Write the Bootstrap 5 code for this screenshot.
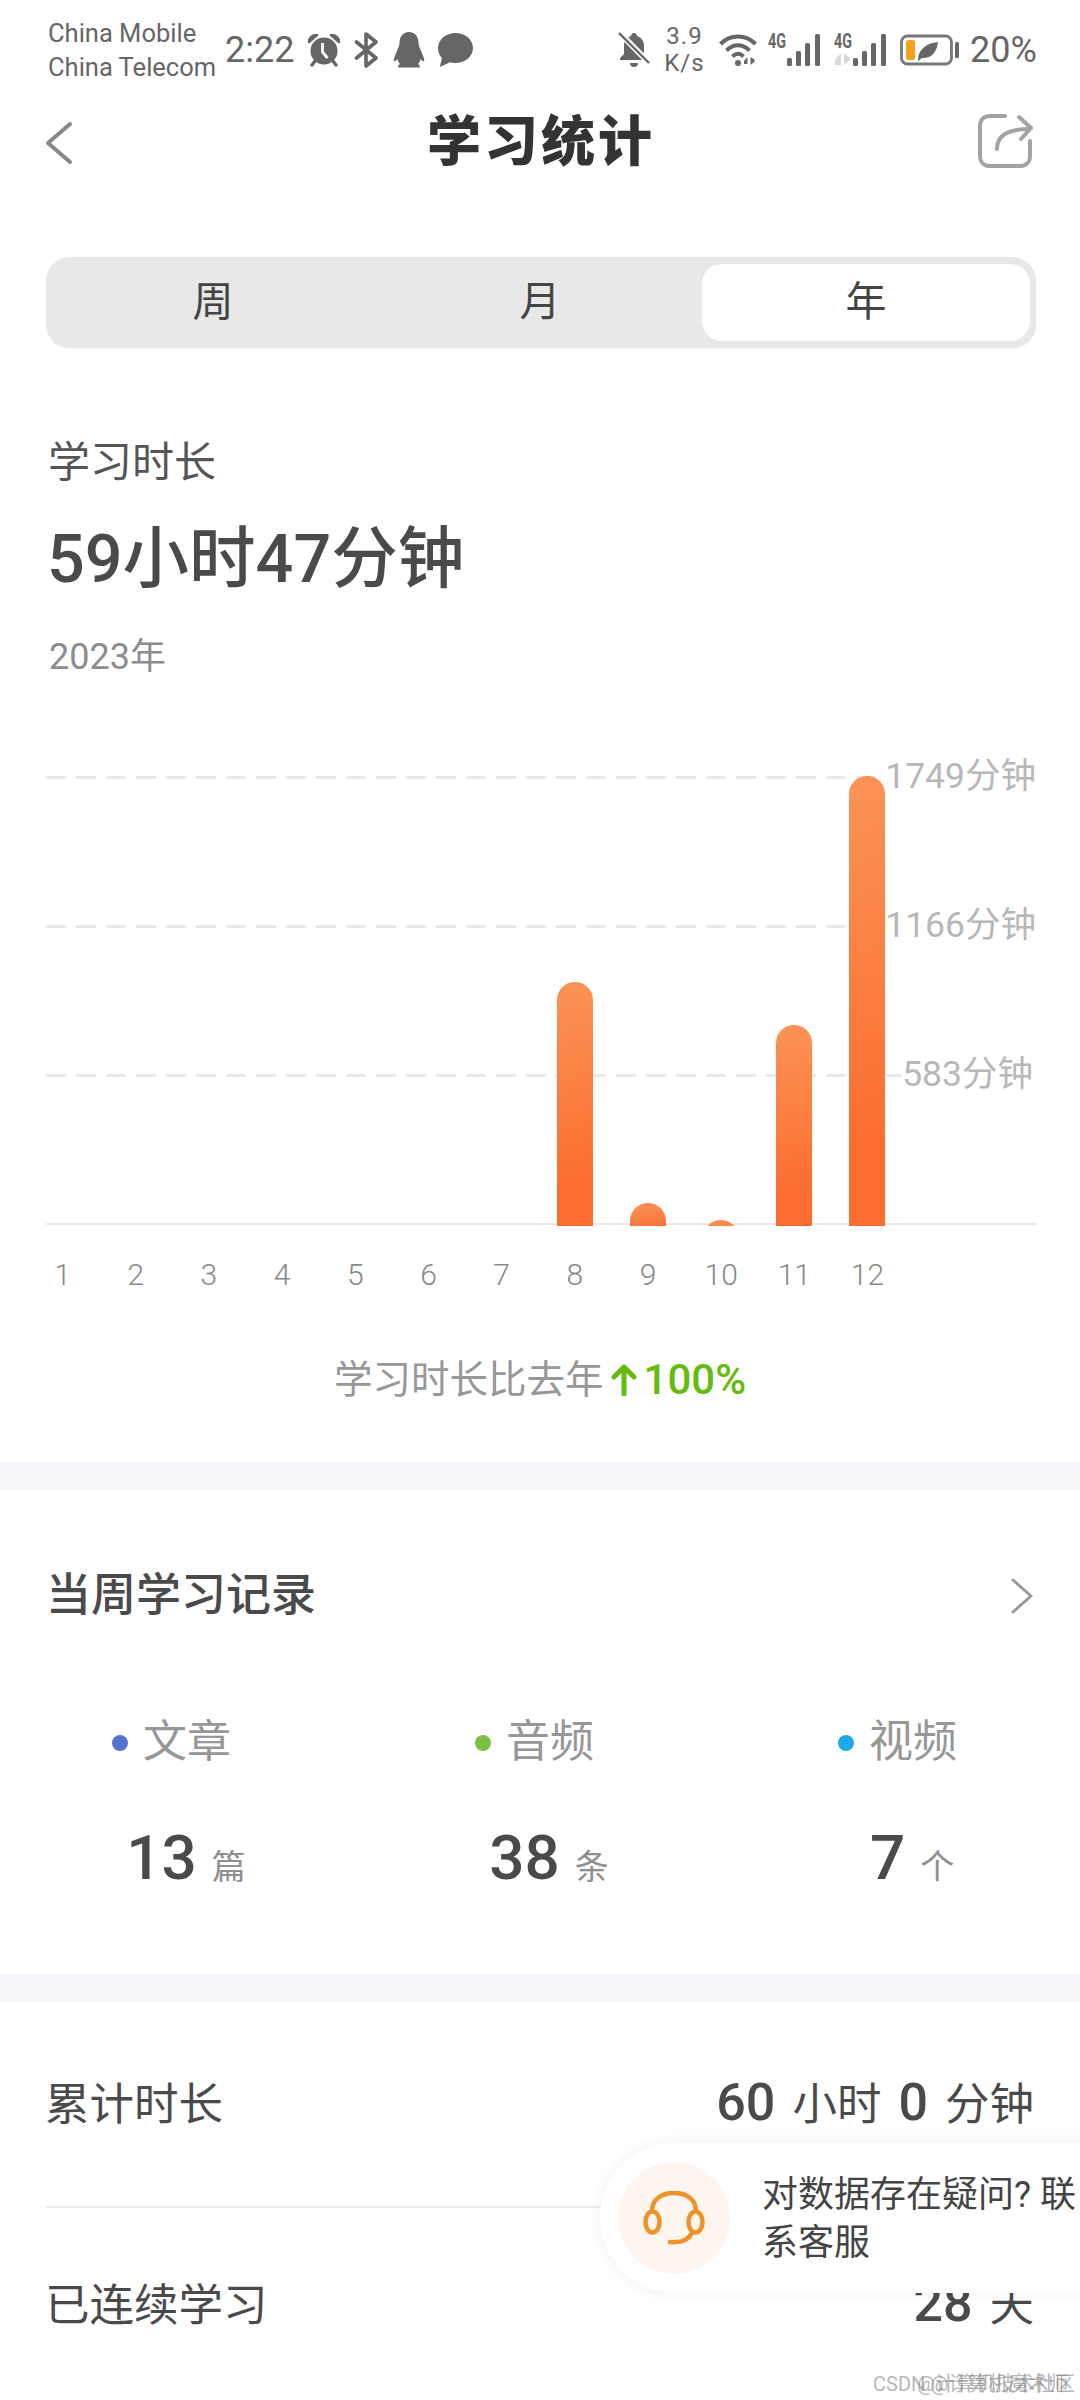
<!DOCTYPE html>
<html lang="zh-CN">
<head>
<meta charset="utf-8">
<title>学习统计</title>
<link href="https://cdn.jsdelivr.net/npm/bootstrap@5.3.0/dist/css/bootstrap.min.css" rel="stylesheet">
<style>
html,body{margin:0;background:#fff}
body{font-family:Roboto,"Noto Sans CJK SC",sans-serif;color:#4a4a4a}
.page{position:relative;width:1080px;height:2400px;overflow:hidden;background:#fff}
.sbar{height:85px;padding:14px 43px 0 48px;color:#666}
.carrier{font-size:25.500px;line-height:34px;width:177px;white-space:nowrap}
.clock{font-size:36px;line-height:1;width:82px}
.speed{font-size:24px;line-height:27px;width:51px;text-align:center;letter-spacing:1px;white-space:nowrap}
.pct{font-size:36px;line-height:1;margin-left:10px;width:67px;white-space:nowrap}
.sicons svg{display:block;flex:none}
.sig{margin-top:-6px;margin-right:12px}
.topbar{height:116px;padding:0 47px 0 45px}
.topbar h1{font-size:54px;font-weight:900;color:#333;line-height:1;margin:0;letter-spacing:3px;position:absolute;left:427px}
.seg{height:90px;margin:56px 44px 0 46px;background:#e8e8e8;border-radius:24px;padding:7px 6px 6px 2px;box-shadow:0 2px 0 #efefef}
.seg div{flex:0 0 327px;font-size:41px;color:#444;border-radius:20px;padding-left:3px}
.seg .on{flex:1 1 0;background:#fff;padding-left:0}
.lbl{font-size:42px;line-height:50px;color:#555;margin:91px 0 0 48px}
.big{font-size:66.500px;line-height:80px;font-weight:500;margin:31px 0 0 47px}
.yr{font-size:36px;line-height:44px;color:#8d8d8d;margin:36px 0 0 49px}
.plot{position:relative;margin-top:78px;padding:0 44px 0 46px}
.gl{height:40px;margin-bottom:109px;color:#b7b7b7;font-size:35.500px}
.gl:nth-child(3){padding-right:3px}
.dash{height:3px;flex:1;background:repeating-linear-gradient(90deg,#e9e9e9 0 20px,transparent 20px 30px)}
.base{height:40px}
.base i{display:block;height:2px;background:#e9e9e9}
.bars{position:absolute;left:26px;top:20px;width:878px;height:449px}
.bars>div{flex:1;display:flex;justify-content:center;align-items:flex-end}
.bwrap{width:36px;overflow:hidden;display:flex;align-items:flex-start}
.bwrap i{display:block;width:36px;height:100%;min-height:36px;border-radius:18px 18px 0 0;background:linear-gradient(170deg,#fb9356,#fc6c2e 85%)}
.xl{width:878px;margin:11px 0 0 26px;font-size:30px;font-weight:300;line-height:40px;color:#888}
.xl span{flex:1;text-align:center}
.cmp{font-size:38.500px;line-height:50px;height:50px;margin-top:60px;color:#979797;padding-left:334px;white-space:nowrap}
.cmp svg{margin:0 7px;flex:none}
.cmp b{font-size:42px;font-weight:500;color:#66bb11}
.band{height:28px;background:#f5f6f9}
.sect{font-size:45px;line-height:56px;height:56px;font-weight:500;margin:78px 47px 0 46px}
.stats{padding-left:112px;gap:215px;margin-top:90px}
.stat{width:148px}
.stat .nm{font-size:44px;line-height:56px;height:56px;color:#979797;white-space:nowrap}
.dot{display:inline-block;width:16px;height:16px;border-radius:50%;margin-right:15px;vertical-align:6px}
.stat .val{font-size:62px;line-height:76px;height:76px;font-weight:500;margin-top:50px;text-align:center;white-space:nowrap}
.val small{font-size:34px;font-weight:400;color:#8f8f8f;margin-left:15px}
.kv{font-size:44.500px;line-height:56px;height:56px;padding:0 46px 0 45px;white-space:nowrap}
.kv b{font-weight:500;font-size:52px;margin:0 17px;line-height:1}
.hr{height:2px;background:#ebebeb;margin:73px 44px 70px 46px}
.pop{position:absolute;left:600px;top:2143px;width:520px;height:150px;background:#fff;border-radius:75px 0 0 75px;box-shadow:0 0 12px 4px rgba(0,0,0,.035);padding-left:18px;gap:32px}
.halo{width:112px;height:112px;border-radius:50%;background:#fdf5ee;flex:none}
.ptext{font-size:36px;line-height:48px;color:#444;width:316px;padding-top:2px}
.wm{position:absolute;font-size:20px;line-height:24px;color:rgba(120,120,120,.55);top:2372px;white-space:nowrap}
</style>
</head>
<body>
<div class="page">
  <div class="sbar d-flex align-items-center">
    <div class="carrier">China Mobile<br>China Telecom</div>
    <div class="clock">2:22</div>
    <div class="sicons d-flex align-items-center">
      <svg width="34" height="34" viewBox="0 0 34 34" style="margin-right:13px"><path d="M2 9C2 5 5 2 10 2L2 9zM32 9c0-4-3-7-8-7l8 7z" fill="#666" stroke="#666" stroke-width="2.500" stroke-linejoin="round"/><circle cx="17" cy="18" r="13.500" fill="#666"/><path d="M15.500 10v9l5 6" fill="none" stroke="#fff" stroke-width="2.800"/><path d="M8 28 5 32M26 28l3 4" stroke="#666" stroke-width="3.400" stroke-linecap="round"/></svg>
      <svg width="26" height="36" viewBox="0 0 26 36" style="margin-right:13px"><path d="M2.500 10 22 26 12 34V2l10 8L2.500 26" fill="none" stroke="#666" stroke-width="3.600" stroke-linejoin="round" stroke-linecap="round"/></svg>
      <svg width="32" height="36" viewBox="0 0 32 36" style="margin-right:13px"><path d="M16 0c6.500 0 9.500 5 9.500 11 0 3 1.500 5 3 9 1.500 4 3.500 8 2.500 9-1 .6-2.500-.6-3.500-2-.5 2-1 3.500-2.500 5 1.500.6 2 2 2 3.500H5c0-1.500.5-3 2-3.500-1.500-1.500-2-3-2.500-5C3.500 28.400 2 29.600 1 29c-1-1 1-5 2.500-9 1.500-4 3-6 3-9C6.500 5 9.500 0 16 0z" fill="#666"/></svg>
      <svg width="35" height="34" viewBox="0 0 35 34"><path d="M17.500 0C27 0 35 6.500 35 15c0 8.500-8 15-17.500 15-2 0-3.800-.3-5.500-.8L3 33.500c-.6.300-1.200-.2-1-.8l2-7.500C1.500 22.500 0 19 0 15 0 6.500 8 0 17.500 0z" fill="#666"/></svg>
    </div>
    <div class="flex-fill"></div>
    <div class="sicons d-flex align-items-center">
      <svg width="32" height="36" viewBox="0 0 32 36" style="margin-right:9px"><path d="M16 1c2 0 3 1.500 3 3 5 1.500 7 5.500 7 10v8l4 4v2H2v-2l4-4v-8c0-5 2-8.500 7-10 0-1.500 1-3 3-3z" fill="#666"/><path d="M12 31h8c0 3-2 4-4 4s-4-1-4-4z" fill="#666"/><path d="M1 0 32 32" stroke="#fff" stroke-width="6"/><path d="M1 1 31 31" stroke="#666" stroke-width="2.400"/></svg>
      <div class="speed">3.9<br>K/s</div>
      <svg width="40" height="34" viewBox="0 0 40 34" style="margin-left:9px;margin-right:9px"><path d="M1.500 11C11 1 27 1 36.500 11" fill="none" stroke="#666" stroke-width="4"/><path d="M7.500 17.500c7-7 16-7 23 0" fill="none" stroke="#666" stroke-width="4"/><path d="M13.500 23.500c3.500-3.500 7.500-3.500 11 0" fill="none" stroke="#666" stroke-width="4"/><circle cx="19" cy="30" r="3" fill="#666"/><path d="M28.500 31V24l-3.500 4v3zM31.500 24v8l4-3.500v-2z" fill="#666"/></svg>
      <svg class="sig" width="54" height="40" viewBox="0 -6 54 40"><text x="0" y="15" font-family="Roboto,sans-serif" font-size="21" font-weight="700" fill="#666" textLength="18" lengthAdjust="spacingAndGlyphs">4G</text><g fill="#666"><rect x="19" y="25" width="5" height="8" rx="1.500"/><rect x="28" y="18" width="5" height="15" rx="1.500"/><rect x="37" y="10" width="5" height="23" rx="1.500"/><rect x="47" y="1" width="5" height="32" rx="1.500"/></g></svg>
      <svg class="sig" width="54" height="40" viewBox="0 -6 54 40"><text x="0" y="15" font-family="Roboto,sans-serif" font-size="21" font-weight="700" fill="#666" textLength="18" lengthAdjust="spacingAndGlyphs">4G</text><path d="M1 27 7 20v12H1zM10 20v12l6-5v-2z" fill="#d8d8d8"/><g fill="#666"><rect x="19" y="25" width="5" height="8" rx="1.500"/><rect x="28" y="18" width="5" height="15" rx="1.500"/><rect x="37" y="10" width="5" height="23" rx="1.500"/><rect x="47" y="1" width="5" height="32" rx="1.500"/></g></svg>
      <svg width="60" height="32" viewBox="0 0 60 32"><rect x="1.500" y="2" width="50" height="28" rx="6" fill="none" stroke="#777" stroke-width="2.800"/><rect x="6" y="6" width="9" height="20" rx="2.500" fill="#f7a01c"/><path d="M18 26c0-10 8-17 20-18-1 11-8 17-16 16l-4 3z" fill="#666"/><rect x="55" y="8" width="4" height="16" rx="1.500" fill="#666"/></svg>
      <div class="pct">20%</div>
    </div>
  </div>

  <div class="topbar d-flex align-items-center justify-content-between">
    <svg width="28" height="44" viewBox="0 0 28 44"><path d="M25 3 3 22l22 19" fill="none" stroke="#888" stroke-width="4" stroke-linecap="round" stroke-linejoin="round"/></svg>
    <h1>学习统计</h1>
    <svg width="56" height="56" viewBox="0 0 56 56" style="margin-top:-4px"><path d="M28 3H13C7 3 3 7 3 13v30c0 6 4 10 10 10h30c6 0 10-4 10-10V28" fill="none" stroke="#a3a3a3" stroke-width="4" stroke-linecap="round"/><path d="M20 36c0-12 9-20 32-20" fill="none" stroke="#a3a3a3" stroke-width="4" stroke-linecap="round"/><path d="M42 4 54 15 44 26" fill="none" stroke="#a3a3a3" stroke-width="4" stroke-linecap="round" stroke-linejoin="round"/></svg>
  </div>

  <div class="seg d-flex text-center">
    <div class="d-flex align-items-center justify-content-center">周</div>
    <div class="d-flex align-items-center justify-content-center">月</div>
    <div class="on d-flex align-items-center justify-content-center">年</div>
  </div>

  <div class="lbl">学习时长</div>
  <div class="big">59小时47分钟</div>
  <div class="yr">2023年</div>

  <div class="plot">
    <div class="gl d-flex align-items-center"><div class="dash"></div><span>1749分钟</span></div>
    <div class="gl d-flex align-items-center"><div class="dash"></div><span>1166分钟</span></div>
    <div class="gl d-flex align-items-center"><div class="dash"></div><span>583分钟</span></div>
    <div class="base d-flex flex-column justify-content-center"><i></i></div>
    <div class="bars d-flex">
      <div></div><div></div><div></div><div></div><div></div><div></div><div></div>
      <div><div class="bwrap" style="height:244px"><i></i></div></div>
      <div><div class="bwrap" style="height:23px"><i></i></div></div>
      <div><div class="bwrap" style="height:6px"><i></i></div></div>
      <div><div class="bwrap" style="height:201px"><i></i></div></div>
      <div><div class="bwrap" style="height:450px"><i></i></div></div>
    </div>
  </div>
  <div class="xl d-flex"><span>1</span><span>2</span><span>3</span><span>4</span><span>5</span><span>6</span><span>7</span><span>8</span><span>9</span><span>10</span><span>11</span><span>12</span></div>
  <div class="cmp d-flex align-items-center">学习时长比去年<svg width="26" height="32" viewBox="0 0 26 32"><path d="M13 30V3M3 13 13 3l10 10" fill="none" stroke="#66bb11" stroke-width="5" stroke-linecap="round" stroke-linejoin="round"/></svg><b>100%</b></div>
  <div class="band" style="margin-top:57px"></div>

  <div class="sect d-flex align-items-center justify-content-between">当周学习记录
    <svg width="22" height="36" viewBox="0 0 22 36"><path d="M2 2 20 18 2 34" fill="none" stroke="#999" stroke-width="3" stroke-linecap="round" stroke-linejoin="round"/></svg>
  </div>
  <div class="stats d-flex">
    <div class="stat"><div class="nm"><span class="dot" style="background:#5572cf"></span>文章</div><div class="val">13<small>篇</small></div></div>
    <div class="stat"><div class="nm"><span class="dot" style="background:#7bc043"></span>音频</div><div class="val">38<small>条</small></div></div>
    <div class="stat"><div class="nm"><span class="dot" style="background:#1da8e8"></span>视频</div><div class="val">7<small>个</small></div></div>
  </div>
  <div class="band" style="margin-top:78px"></div>

  <div class="kv d-flex justify-content-between" style="margin-top:75px"><span>累计时长</span><span><b class="ms-0">60</b>小时<b>0</b>分钟</span></div>
  <div class="hr"></div>
  <div class="kv d-flex justify-content-between"><span>已连续学习</span><span><b class="ms-0">28</b>天</span></div>

  <div class="pop d-flex align-items-center">
    <div class="halo d-flex align-items-center justify-content-center">
      <svg width="62" height="54" viewBox="0 0 62 54"><path d="M9 20C9 8 19 2 31 2s22 6 22 18" fill="none" stroke="#ee9229" stroke-width="4.500"/><ellipse cx="9.500" cy="31" rx="7" ry="10.500" fill="none" stroke="#ee9229" stroke-width="4.500"/><ellipse cx="52.500" cy="31" rx="7" ry="10.500" fill="none" stroke="#ee9229" stroke-width="4.500"/><path d="M27 51c10 1 18-1 22-9" fill="none" stroke="#ee9229" stroke-width="4.500" stroke-linecap="round"/></svg>
    </div>
    <div class="ptext">对数据存在疑问? 联系客服</div>
  </div>
  <div class="wm" style="left:873px">CSDN @计算机魔术师</div>
  <div class="wm" style="left:917px">@计算机技术社区</div>
</div>
</body>
</html>
